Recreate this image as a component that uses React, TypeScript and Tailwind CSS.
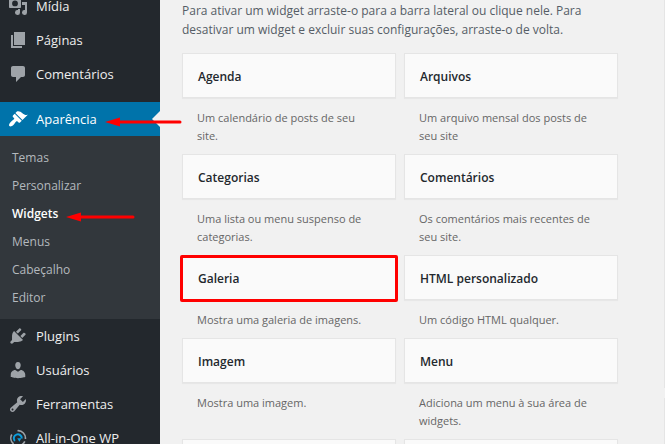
import type { ReactNode } from 'react'

const ICONS: Record<string, ReactNode> = {
  media: (
    <path fillRule="evenodd" d="M13 11V4c0-.55-.45-1-1-1h-1.67L9 1H5L3.67 3H2c-.55 0-1 .45-1 1v7c0 .55.45 1 1 1h10c.55 0 1-.45 1-1zM7 4.5a2.9 2.9 0 1 1 0 5.8 2.9 2.9 0 0 1 0-5.8zM14 6h5v10.500a2.500 2.500 0 1 1-2-2.450V9h-3V6zm-4 8.050V13h2v3.500a2.500 2.500 0 1 1-2-2.450z" />
  ),
  pages: <path d="M6 15V2h11v13H6zM5 16h9v2H3V5h2v11z" />,
  comments: <path d="M5 2h10c1.100 0 2 .9 2 2v7c0 1.100-.9 2-2 2h-2l-5 5v-5H5c-1.100 0-2-.9-2-2V4c0-1.100.9-2 2-2z" />,
  appearance: (
    <path d="M14.480 11.060L7.410 3.990l1.500-1.500c.5-.56 2.300-.47 3.510.32 1.210.8 1.430 1.280 2.910 2.100 1.180.64 2.450 1.260 4.450.85zm-.71.71L6.700 4.700 4.930 6.470c-.39.39-.39 1.020 0 1.410l1.060 1.060c.39.39.39 1.030 0 1.420-.6.600-1.430 1.110-2.210 1.690-.35.26-.7.530-1.010.84C1.430 14.230.4 16.080 1.400 17.070c.99 1 2.840-.03 4.180-1.360.31-.31.580-.66.850-1.020.57-.78 1.080-1.610 1.690-2.210.39-.39 1.020-.39 1.410 0l1.060 1.060c.39.39 1.020.39 1.410 0z" />
  ),
  plugins: (
    <path d="M13.110 4.360L9.870 7.600 8 5.730l3.240-3.240c.35-.34 1.050-.2 1.560.32.52.51.66 1.210.31 1.550zm-8 1.770l.91-1.120 9.010 9.010-1.190.84c-.71.71-2.630 1.160-3.820 1.160H6.140L4.900 17.260c-.59.59-1.540.59-2.120 0-.59-.58-.59-1.530 0-2.120l1.240-1.240v-3.880c0-1.130.4-3.190 1.090-3.890zm7.260 3.970l3.240-3.240c.34-.35 1.040-.21 1.550.31.520.51.660 1.210.31 1.550l-3.240 3.250z" />
  ),
  users: (
    <path d="M10 9.250c-2.270 0-2.730-3.440-2.730-3.440C7 4.020 7.820 2 9.970 2c2.160 0 2.980 2.020 2.710 3.810 0 0-.41 3.440-2.680 3.440zm0 2.570L12.720 10c2.390 0 4.520 2.330 4.520 4.530v2.490s-3.650 1.130-7.240 1.130c-3.650 0-7.240-1.130-7.240-1.130v-2.490c0-2.250 1.940-4.480 4.470-4.480z" />
  ),
  tools: (
    <path d="M16.680 9.770c-1.340 1.340-3.300 1.670-4.950.99l-5.410 6.520c-.99.99-2.590.99-3.580 0s-.99-2.590 0-3.570l6.520-5.420c-.68-1.650-.35-3.610.99-4.950 1.280-1.280 3.120-1.620 4.720-1.060l-2.890 2.890 2.820 2.820 2.860-2.870c.53 1.580.18 3.390-1.080 4.650zM3.810 16.210c.4.390 1.040.390 1.430 0 .4-.4.400-1.040 0-1.430-.39-.4-1.030-.4-1.430 0-.39.390-.39 1.030 0 1.430z" />
  ),
  migration: (
    <g fill="none" strokeWidth="1.600">
      <path stroke="#9ea3a8" d="M9.500 2.700A7.400 7.400 0 0 1 17.400 11M16.800 13.400A7.400 7.400 0 0 1 8.500 17.300M5.600 15.900A7.400 7.400 0 0 1 3.800 6.500" />
      <path stroke="#0d9ddb" strokeWidth="2" d="M6.800 13a4 4 0 1 1 7-2.500" />
      <path fill="#0d9ddb" d="M9.200 10.200h4.200l-2 3.600z" />
    </g>
  ),
}

const TOP_ITEMS = [
  { label: 'Mídia', icon: 'media' },
  { label: 'Páginas', icon: 'pages' },
  { label: 'Comentários', icon: 'comments' },
]

const SUBMENU = ['Temas', 'Personalizar', 'Widgets', 'Menus', 'Cabeçalho', 'Editor']

const BOTTOM_ITEMS = [
  { label: 'Plugins', icon: 'plugins' },
  { label: 'Usuários', icon: 'users' },
  { label: 'Ferramentas', icon: 'tools' },
  { label: 'All-in-One WP', icon: 'migration' },
]

const WIDGETS = [
  { title: 'Agenda', desc: 'Um calendário de posts de seu site.' },
  { title: 'Arquivos', desc: 'Um arquivo mensal dos posts de seu site' },
  { title: 'Categorias', desc: 'Uma lista ou menu suspenso de categorias.' },
  { title: 'Comentários', desc: 'Os comentários mais recentes de seu site.' },
  { title: 'Galeria', desc: 'Mostra uma galeria de imagens.', marked: true },
  { title: 'HTML personalizado', desc: 'Um código HTML qualquer.' },
  { title: 'Imagem', desc: 'Mostra uma imagem.' },
  { title: 'Menu', desc: 'Adiciona um menu à sua área de widgets.' },
  { title: '', desc: '' },
  { title: '', desc: '' },
]

function MenuItem({ label, icon, active }: { label: string; icon: string; active?: boolean }) {
  return (
    <a
      href="#"
      className={`relative flex h-[34px] items-center gap-2 pl-2 text-[13px] ${active ? 'bg-[#0073aa] text-white' : 'text-[#eeeeee]'}`}
    >
      <svg viewBox="0 0 20 20" className={`h-5 w-5 shrink-0 ${active ? 'fill-white' : 'fill-[#9ea3a8]'}`}>
        {ICONS[icon]}
      </svg>
      <span className="pt-0.5 whitespace-nowrap">{label}</span>
      {active && (
        <span className="absolute top-1/2 right-0 -translate-y-1/2 border-8 border-transparent border-r-[#f1f1f1]" />
      )}
    </a>
  )
}

function Arrow({ length, className }: { length: number; className: string }) {
  return (
    <svg width={length} height="10" viewBox={`0 0 ${length} 10`} className={`absolute z-10 ${className}`}>
      <path d="M0 5L15 .5v9z" fill="#f00" />
      <path d={`M12 5H${length - 2}`} stroke="#f00" strokeWidth="3" strokeLinecap="round" />
    </svg>
  )
}

function Sidebar() {
  return (
    <nav className="-mt-[11px] w-40 shrink-0 bg-[#23282d]">
      {TOP_ITEMS.map((item) => (
        <MenuItem key={item.label} {...item} />
      ))}
      <div className="relative mt-[11px]">
        <MenuItem label="Aparência" icon="appearance" active />
        <Arrow length={77} className="top-[15px] left-[105px]" />
      </div>
      <ul className="bg-[#32373c] pt-2 pb-[7px]">
        {SUBMENU.map((label) => (
          <li key={label} className="relative">
            <a
              href="#"
              className={`flex h-7 items-center px-3 text-xs ${label === 'Widgets' ? 'font-semibold text-white' : 'text-[#b4b9be]'}`}
            >
              {label}
            </a>
            {label === 'Widgets' && <Arrow length={69} className="top-3 left-[66px]" />}
          </li>
        ))}
      </ul>
      {BOTTOM_ITEMS.map((item) => (
        <MenuItem key={item.label} {...item} />
      ))}
    </nav>
  )
}

export default function App() {
  return (
    <div className="flex h-screen overflow-hidden bg-[#f1f1f1] font-['Open_Sans','Noto_Sans',sans-serif]">
      <Sidebar />
      <main className="min-w-0 flex-1 pt-px pr-[47px] pl-[22px]">
        <p className="text-xs leading-[19px] text-[#555d66]">
          Para ativar um widget arraste-o para a barra lateral ou clique nele. Para desativar um widget e excluir suas
          configurações, arraste-o de volta.
        </p>
        <div className="mt-[14px] grid grid-cols-2 gap-x-2">
          {WIDGETS.map((w, i) => (
            <section key={i}>
              <div className="relative flex h-[45px] items-center border border-[#e5e5e5] bg-[#fafafa] px-[15px] pt-0.5 shadow-[0_1px_1px_rgba(0,0,0,0.04)]">
                <h3 className="text-xs font-semibold text-[#23282d]">{w.title}</h3>
                {w.marked && (
                  <span className="absolute -inset-x-[3px] -top-px -bottom-[3px] rounded-xs border-3 border-[#f00]" />
                )}
              </div>
              <p className="pt-[11px] pr-5 pb-[9px] pl-[15px] text-[11px] leading-[18px] text-[#666666]">{w.desc}</p>
            </section>
          ))}
        </div>
      </main>
      {/* left edge of the widget areas column */}
      <aside className="-ml-px flex w-px shrink-0 flex-col gap-[10px]">
        <div className="h-[388px] shrink-0 bg-[#e5e5e5]" />
        <div className="flex-1 bg-[#e5e5e5]" />
      </aside>
    </div>
  )
}
